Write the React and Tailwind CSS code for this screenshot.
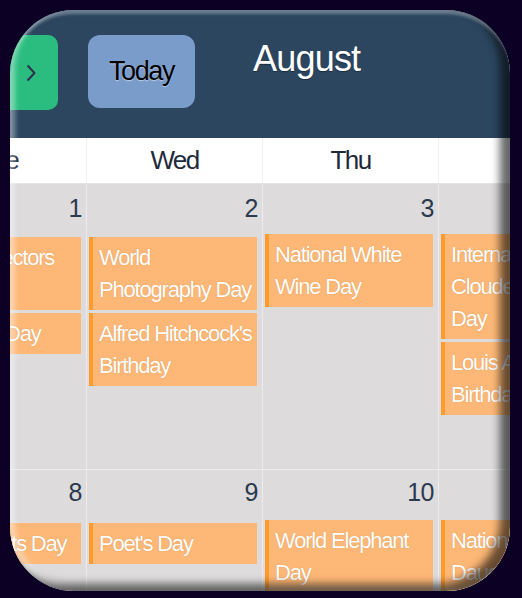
import React from 'react'

// Week strip of a month calendar, shown through a rounded bezel.
const FONT = { fontFamily: '"Liberation Sans", Arial, sans-serif' }

const week1 = [
  { day: 1, events: ['Coin Collectors Day', 'Lammas Day'] },
  { day: 2, events: ['World Photography Day', "Alfred Hitchcock's Birthday"] },
  { day: 3, events: ['National White Wine Day'], lift: true },
  { day: 4, events: ['International Clouded Leopard Day', "Louis Armstrong's Birthday"], lift: true },
]

const week2 = [
  { day: 8, events: ['Happy Cats Day'] },
  { day: 9, events: ["Poet's Day"] },
  { day: 10, events: ['World Elephant Day'], lift: true },
  { day: 11, events: ['National Son and Daughter Day'], lift: true },
]

function Event({ title }) {
  return (
    <div className="ml-[2px] mr-[5px] mb-[3px] border-l-4 border-[#ff9a2c] bg-[#fdb877] pl-[6px] pt-[5px] pb-[4px] text-[22px] leading-[32px] tracking-[-1.2px] text-white [text-shadow:0_0_1px_rgba(120,60,0,0.35)]">
      {title}
    </div>
  )
}

function Cell({ day, events, first, lift }) {
  return (
    <div className="w-[176px] shrink-0 border-r border-[#ececec]">
      <div className={`flex items-center justify-end pr-[4px] text-[25px] tracking-[-0.5px] text-[#2b3a4f] ${first ? 'h-[50px]' : 'h-[46px]'}`}>
        {day}
      </div>
      <div className={first ? (lift ? 'pt-0' : 'pt-[3px]') : lift ? 'pt-[4px]' : 'pt-[7px]'}>
        {events.map((e) => (
          <Event key={e} title={e} />
        ))}
      </div>
    </div>
  )
}

export default function App() {
  return (
    <div className="w-[522px] h-[598px] bg-[#0c0124] p-[10px] pb-[7px] pr-[12px]" style={FONT}>
      <div className="relative h-full overflow-hidden rounded-[64px] bg-[#dddbdc]">
        {/* Toolbar */}
        <div className="flex h-[128px] items-start bg-[#2c4660] pt-[25px]">
          <button className="ml-[-40px] flex h-[75px] w-[88px] items-center justify-end rounded-[10px] bg-[#2bbd80] pr-[22px]">
            <svg width="10" height="18" viewBox="0 0 10 18" fill="none">
              <polyline points="1.5,1.5 8.5,9 1.5,16.5" stroke="#2f2f52" strokeWidth="2" strokeLinejoin="round" />
            </svg>
          </button>
          <button className="ml-[30px] flex h-[73px] w-[107px] items-center justify-center rounded-[12px] bg-[#7a9ccb] text-[27px] tracking-[-1.4px] text-black [text-shadow:0_1px_1px_rgba(255,255,255,0.5)]">
            Today
          </button>
          <h1 className="ml-[58px] mt-[4px] text-[36px] leading-[40px] tracking-[-0.8px] text-white [text-shadow:0_1px_1px_rgba(0,0,0,0.4)]">
            August
          </h1>
        </div>

        {/* Weekday header */}
        <div className="ml-[-99px] flex h-[46px] border-b border-[#e3e3e3] bg-white">
          {['Tue', 'Wed', 'Thu', 'Fri'].map((d) => (
            <div key={d} className="flex w-[176px] shrink-0 items-center justify-center border-r border-[#efefef] text-[26px] tracking-[-1.6px] text-[#1e2a3a]">
              {d}
            </div>
          ))}
        </div>

        {/* Weeks */}
        <div className="ml-[-99px] flex h-[286px] border-b border-[#ececec]">
          {week1.map((c) => (
            <Cell key={c.day} {...c} first />
          ))}
        </div>
        <div className="ml-[-99px] flex h-[200px]">
          {week2.map((c) => (
            <Cell key={c.day} {...c} />
          ))}
        </div>

        {/* Bezel */}
        <div className="pointer-events-none absolute inset-0 rounded-[64px] shadow-[inset_0_7px_3px_-3px_rgba(255,255,255,0.3),inset_-10px_-7px_8px_rgba(0,0,0,0.6),inset_5px_-4px_5px_rgba(255,255,255,0.4)]" />
      </div>
    </div>
  )
}
